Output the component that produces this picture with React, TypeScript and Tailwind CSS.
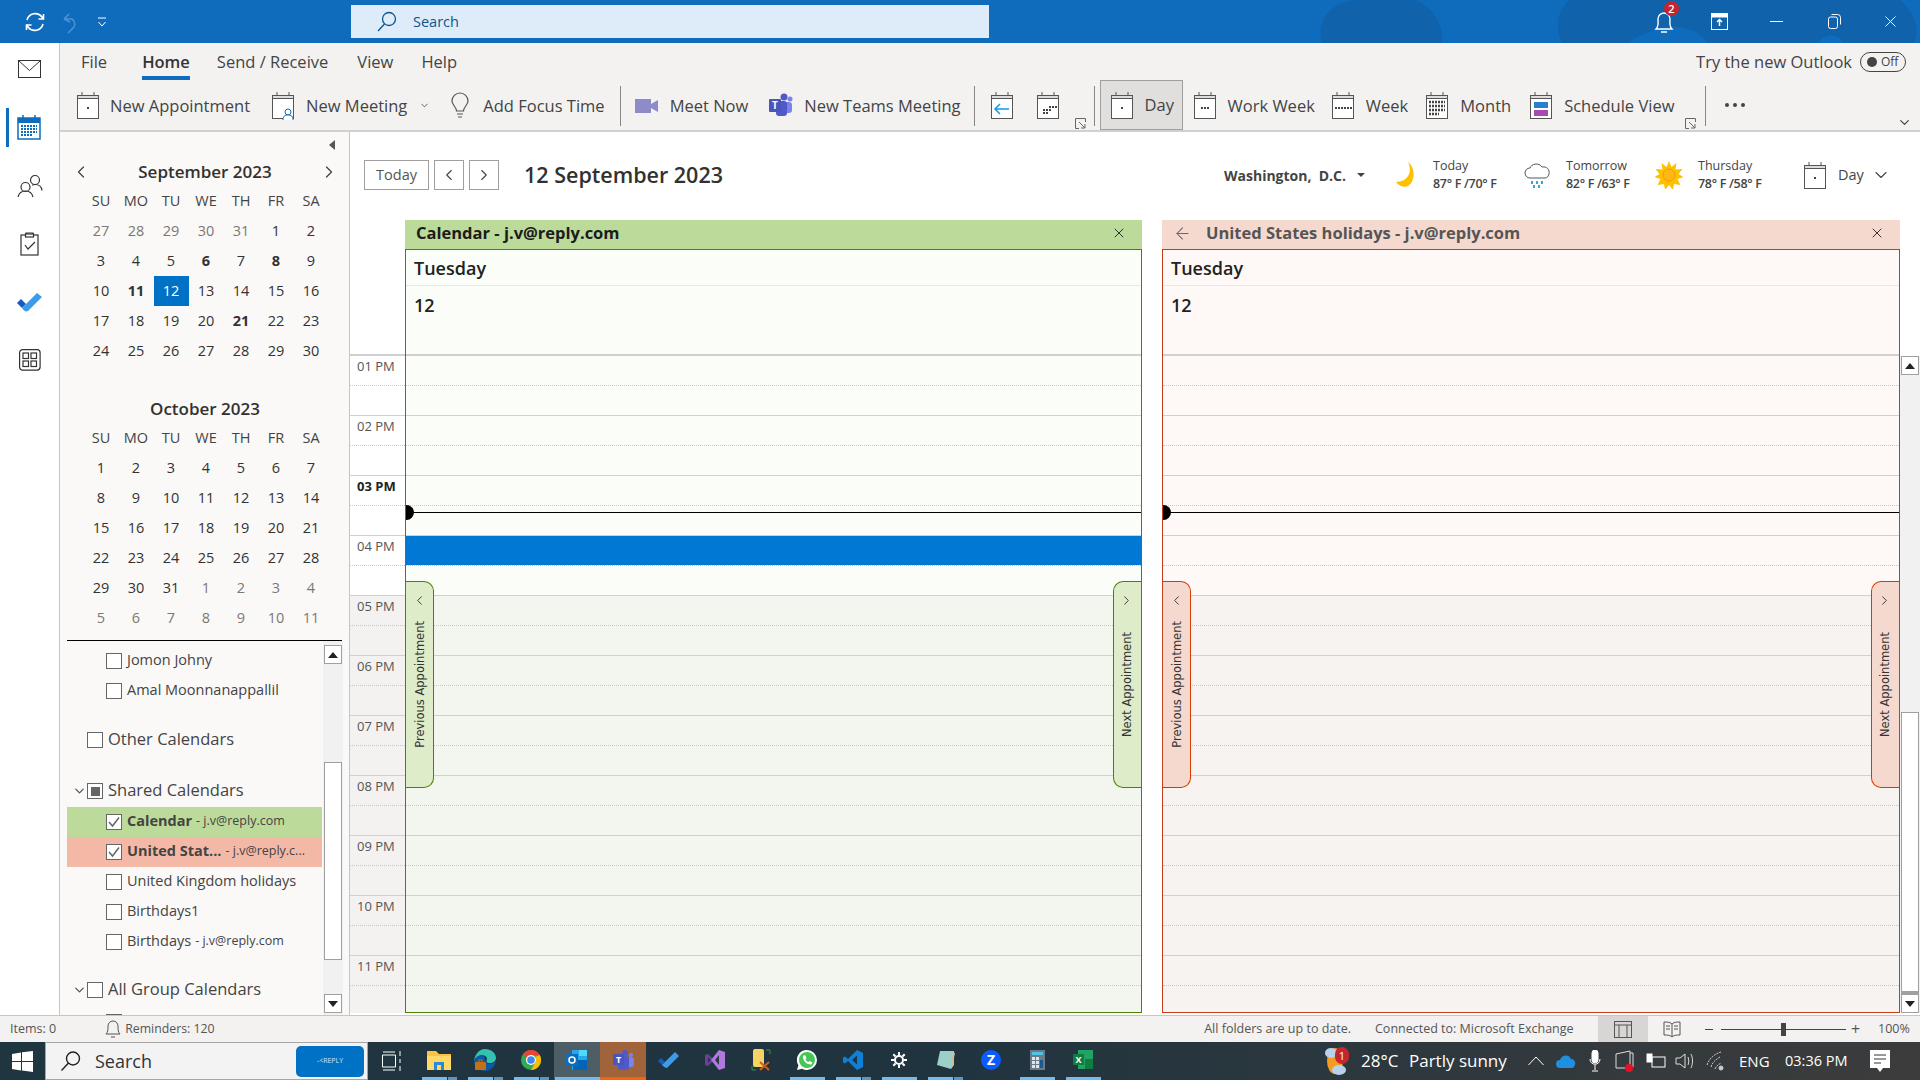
import { ChevronDown, ChevronLeft, ChevronRight, X, ArrowLeft } from 'lucide-react'
import type { ReactNode } from 'react'

const sep = [
  [27, 28, 29, 30, 31, 1, 2],
  [3, 4, 5, 6, 7, 8, 9],
  [10, 11, 12, 13, 14, 15, 16],
  [17, 18, 19, 20, 21, 22, 23],
  [24, 25, 26, 27, 28, 29, 30],
]
const oct = [
  [1, 2, 3, 4, 5, 6, 7],
  [8, 9, 10, 11, 12, 13, 14],
  [15, 16, 17, 18, 19, 20, 21],
  [22, 23, 24, 25, 26, 27, 28],
  [29, 30, 31, 1, 2, 3, 4],
  [5, 6, 7, 8, 9, 10, 11],
]
const weekdays = ['SU', 'MO', 'TU', 'WE', 'TH', 'FR', 'SA']
const hours = ['01 PM', '02 PM', '03 PM', '04 PM', '05 PM', '06 PM', '07 PM', '08 PM', '09 PM', '10 PM', '11 PM']

function CalGlyph({ children, w = 24, h = 29 }: { children?: ReactNode; w?: number; h?: number }) {
  return (
    <svg width={w} height={h} viewBox="0 0 24 29" fill="none" className="shrink-0">
      <rect x="1.5" y="4.5" width="21" height="23" fill="#fff" stroke="#555" />
      <rect x="1" y="4" width="22" height="4" fill="#555" />
      <rect x="2" y="5" width="20" height="2" fill="#ddd" />
      <path d="M6 1v4M18 1v4" stroke="#555" />
      {children}
    </svg>
  )
}

function Dots({ cells, color = '#444' }: { cells: [number, number][]; color?: string }) {
  return (
    <>
      {cells.map(([x, y]) => (
        <rect key={`${x}-${y}`} x={x} y={y} width="2" height="2" fill={color} />
      ))}
    </>
  )
}

function ExpandMark() {
  return (
    <svg width="11" height="11" viewBox="0 0 11 11" fill="none" className="shrink-0">
      <path d="M10.5 4V.5H.5v10H4M4 4l6 6M10 6v4H6" stroke="#666" />
    </svg>
  )
}

function TitleBar() {
  return (
    <div className="relative h-[43px] shrink-0 bg-[#0f6cbd] flex items-center text-white overflow-hidden">
      <svg className="absolute left-[1300px] top-0" width="620" height="43" viewBox="0 0 620 43">
        <path d="M22 43C16 24 28 2 56 0h60c18 8 28 26 26 43zM262 43c-8-16-4-34 8-43h330c16 14 20 30 14 43h-70c-6-10-20-10-26 0h-110c-10-14-30-20-50-14-12 4-22 8-30 14z" fill="#1062ab" />
      </svg>
      <div className="w-[351px] flex items-center relative">
        <svg width="24" height="24" viewBox="0 0 24 24" fill="none" stroke="#fff" strokeWidth="1.6" className="ml-[23px]">
          <path d="M4 10a8.5 8.5 0 0 1 15-3l1.5 2M20 14a8.5 8.5 0 0 1-15 3l-1.5-2M20.5 4v5h-5M3.500 20v-5h5" />
        </svg>
        <svg width="18" height="24" viewBox="0 0 18 24" fill="none" stroke="#4c93d6" strokeWidth="1.5" className="ml-[15px]">
          <path d="M2 9l5-5M2 9l6 3M2 9h8a6 6 0 0 1 2 8l-6 6" />
        </svg>
        <svg width="10" height="12" viewBox="0 0 10 12" fill="none" stroke="#fff" className="ml-[17px]">
          <path d="M1 2h8M1.500 6L5 10l3.500-4" />
        </svg>
      </div>
      <div className="relative w-[638px] h-[33px] bg-[#deecf9] flex items-center text-[#0f548c]">
        <svg width="22" height="22" viewBox="0 0 22 22" fill="none" stroke="#0f548c" strokeWidth="1.3" className="ml-[25px]">
          <circle cx="13" cy="8" r="6.500" />
          <path d="M8.500 13L2 20" />
        </svg>
        <span className="ml-[15px] text-[14.5px]">Search</span>
      </div>
      <div className="relative ml-auto flex items-center">
        <div className="relative mr-[35px]">
          <svg width="24" height="28" viewBox="0 0 24 28" fill="none" stroke="#fff" strokeWidth="1.4">
            <path d="M4 21c3-3 2-6 2-10a6 6 0 0 1 12 0c0 4-1 7 2 10zM9 24h6" />
          </svg>
          <span className="absolute left-[12px] -top-[7px] w-[15px] h-[15px] rounded-full bg-[#c4262e] text-[11px] leading-[15px] text-center font-semibold">2</span>
        </div>
        <svg width="17" height="17" viewBox="0 0 17 17" fill="none" stroke="#fff" className="mr-[42px]">
          <rect x=".5" y=".5" width="16" height="16" />
          <rect x="1" y="1" width="15" height="3" fill="#fff" />
          <path d="M8.500 13V7M6 9l2.500-2.500L11 9" strokeWidth="1.500" />
        </svg>
        <div className="w-[13px] h-px bg-white mr-[45px]" />
        <svg width="13" height="15" viewBox="0 0 13 15" fill="none" stroke="#fff" className="mr-[40px]">
          <rect x=".5" y="3" width="9" height="11.500" rx="2" />
          <path d="M3.500.5h6a3 3 0 0 1 3 3v7" />
        </svg>
        <X size={19} strokeWidth={1.2} className="mr-[20px]" />
      </div>
    </div>
  )
}

function RailIcon({ children, active }: { children: ReactNode; active?: boolean }) {
  return (
    <div className="relative h-[58px] flex items-center justify-center">
      {active && <div className="absolute left-[6px] top-[9px] w-[3px] h-[39px] bg-[#0f6cbd]" />}
      {children}
    </div>
  )
}

function Rail() {
  return (
    <div className="w-[60px] shrink-0 bg-white border-r border-[#c8c6c4] flex flex-col">
      <div className="-mt-[2px]">
        <RailIcon>
          <svg width="24" height="20" viewBox="0 0 24 20" fill="none" stroke="#333">
            <rect x=".5" y=".5" width="22" height="17" fill="#fff" />
            <path d="M.5 .5l11 10 11-10" />
          </svg>
        </RailIcon>
        <RailIcon active>
          <svg width="26" height="26" viewBox="0 0 26 26" fill="none">
            <rect x="1" y="3" width="22" height="21" fill="#fff" stroke="#0f6cbd" strokeWidth="1.500" />
            <rect x="1" y="3" width="22" height="5" fill="#0f6cbd" />
            <path d="M6 0v4M18 0v4" stroke="#0f6cbd" strokeWidth="1.500" />
            <path d="M4 11h16M4 14h16M4 17h16M4 20h12" stroke="#0f6cbd" strokeWidth="2" strokeDasharray="2 1" />
          </svg>
        </RailIcon>
        <RailIcon>
          <svg width="26" height="24" viewBox="0 0 26 24" fill="none" stroke="#333" strokeWidth="1.200">
            <circle cx="8.500" cy="13" r="4.500" />
            <path d="M1 23c1-4 3-6 7.500-6s6.500 2 7.500 6" />
            <circle cx="18" cy="6" r="4.500" />
            <path d="M15 11c1 0 2-.5 3-.5 4 0 6.500 2 7 6" />
          </svg>
        </RailIcon>
        <RailIcon>
          <svg width="20" height="24" viewBox="0 0 20 24" fill="none" stroke="#333" strokeWidth="1.200">
            <rect x="1" y="3" width="17" height="20" />
            <path d="M6 3V1h7v2M5 13l3 4 7-7" />
            <rect x="5.500" y="2" width="8" height="3" fill="#fff" />
          </svg>
        </RailIcon>
        <RailIcon>
          <svg width="26" height="20" viewBox="0 0 26 20" fill="none">
            <path d="M0 11l4-4 5 5-4 4z" fill="#185abd" />
            <path d="M5 16l4-4L20 1l5 4L11 19c-2 1-4 0-6-3z" fill="#3d9be9" />
          </svg>
        </RailIcon>
        <RailIcon>
          <svg width="22" height="22" viewBox="0 0 22 22" fill="none" stroke="#333" strokeWidth="1.200">
            <rect x=".6" y=".6" width="20.500" height="20.500" rx="3" />
            <rect x="4" y="4" width="5.500" height="5.500" />
            <rect x="12" y="4" width="5.500" height="5.500" />
            <rect x="4" y="12" width="5.500" height="5.500" />
            <rect x="12" y="12" width="5.500" height="5.500" />
          </svg>
        </RailIcon>
      </div>
    </div>
  )
}

function ToolItem({ icon, label, gap = 'ml-[11px]', className = '' }: { icon: ReactNode; label: string; gap?: string; className?: string }) {
  return (
    <div className={`flex items-center ${className}`}>
      {icon}
      <span className={`${gap} mt-[1px] text-[16.500px] text-[#444] whitespace-nowrap`}>{label}</span>
    </div>
  )
}

function Ribbon() {
  return (
    <div className="h-[89px] shrink-0 bg-[#f3f2f1] border-b-2 border-[#d2d0ce] flex flex-col">
      <div className="h-[38px] flex items-center text-[16.500px] text-[#444] relative">
        <span className="ml-[21px]">File</span>
        <span className="ml-[35px] relative font-semibold text-[#333]">
          Home
          <span className="absolute left-0 right-0 -bottom-[6px] h-[4px] bg-[#0f6cbd]" />
        </span>
        <span className="ml-[27px]">Send / Receive</span>
        <span className="ml-[29px]">View</span>
        <span className="ml-[28px]">Help</span>
        <span className="ml-auto">Try the new Outlook</span>
        <div className="ml-[8px] mr-[14px] w-[46px] h-[20px] rounded-full border border-[#444] flex items-center">
          <span className="ml-[6px] w-[10px] h-[10px] rounded-full bg-[#444]" />
          <span className="ml-[4px] text-[12px]">Off</span>
        </div>
      </div>
      <div className="relative flex items-center h-[49px]">
        <ToolItem
          className="ml-[16px]"
          icon={
            <CalGlyph>
              <Dots cells={[[11, 16]]} />
            </CalGlyph>
          }
          label="New Appointment"
          gap="ml-[10px]"
        />
        <ToolItem
          className="ml-[21px]"
          icon={
            <CalGlyph>
              <circle cx="17" cy="21" r="3" fill="#fff" stroke="#0f6cbd" />
              <path d="M12 29c0-4 2-5 5-5s5 1 5 5" stroke="#0f6cbd" fill="#fff" />
            </CalGlyph>
          }
          label="New Meeting"
        />
        <ChevronDown size={11} className="ml-[12px] text-[#555]" />
        <ToolItem
          className="ml-[21px]"
          icon={
            <svg width="18" height="28" viewBox="0 0 18 28" fill="none" stroke="#555" strokeWidth="1.200">
              <path d="M5.500 19c0-4-4.500-6-4.500-10a8 8 0 0 1 16 0c0 4-4.500 6-4.500 10zM6 22h6M7 25h4" />
            </svg>
          }
          label="Add Focus Time"
          gap="ml-[14px]"
        />
        <div className="ml-[15px] w-px h-[40px] bg-[#8a8886]" />
        <ToolItem
          className="ml-[14px]"
          icon={
            <svg width="24" height="18" viewBox="0 0 24 18" className="shrink-0">
              <rect y="2" width="16" height="14" fill="#8d8cc9" />
              <path d="M16 7l7-4v12l-7-4z" fill="#8d8cc9" />
            </svg>
          }
          label="Meet Now"
        />
        <ToolItem
          className="ml-[21px]"
          icon={
            <svg width="24" height="26" viewBox="0 0 24 26" className="shrink-0">
              <circle cx="15" cy="4" r="3.500" fill="#5059c9" />
              <circle cx="21" cy="6" r="2.500" fill="#7b83eb" />
              <rect x="13" y="9" width="10" height="11" rx="3" fill="#7b83eb" />
              <rect x="7" y="8" width="11" height="15" rx="3" fill="#5059c9" />
              <rect y="6" width="12" height="13" rx="1" fill="#4b53bc" />
              <text x="6" y="16" fontSize="10" fill="#fff" textAnchor="middle" fontWeight="700">T</text>
            </svg>
          }
          label="New Teams Meeting"
        />
        <div className="ml-[13px] w-px h-[40px] bg-[#8a8886]" />
        <div className="ml-[15px]">
          <CalGlyph>
            <path d="M19 18H6M10 13l-5 5 5 5" stroke="#0f9ce8" strokeWidth="1.500" />
          </CalGlyph>
        </div>
        <div className="ml-[22px]">
          <CalGlyph>
            <Dots cells={[[7, 18], [10, 18], [13, 18], [13, 15], [16, 15], [19, 15], [7, 21], [10, 21]]} />
          </CalGlyph>
        </div>
        <div className="ml-[15px] mt-[35px]">
          <ExpandMark />
        </div>
        <div className="ml-[8px] w-px h-[40px] bg-[#8a8886]" />
        <div className="ml-[5px] self-stretch mt-[-1px] w-[83px] bg-[#e1dfdd] border border-[#a19f9d] flex items-center pl-[9px]">
          <CalGlyph>
            <Dots cells={[[11, 16]]} />
          </CalGlyph>
          <span className="ml-[11px] mt-[1px] text-[16.500px] text-[#444]">Day</span>
        </div>
        <ToolItem
          className="ml-[10px]"
          icon={
            <CalGlyph>
              <Dots cells={[[8, 16], [11, 16], [14, 16]]} />
            </CalGlyph>
          }
          label="Work Week"
        />
        <ToolItem
          className="ml-[16px]"
          icon={
            <CalGlyph>
              <Dots cells={[[4, 16], [7, 16], [10, 16], [13, 16], [16, 16], [19, 16]]} />
            </CalGlyph>
          }
          label="Week"
        />
        <ToolItem
          className="ml-[17px]"
          icon={
            <CalGlyph>
              <path d="M4 11h16M4 15h16M4 19h16M4 23h10" stroke="#444" strokeWidth="2.500" strokeDasharray="2 1" />
            </CalGlyph>
          }
          label="Month"
        />
        <ToolItem
          className="ml-[18px]"
          icon={
            <CalGlyph>
              <rect x="5" y="11" width="14" height="6" fill="#2b7cd3" />
              <rect x="5" y="19" width="14" height="6" fill="#a64ab0" />
            </CalGlyph>
          }
          label="Schedule View"
        />
        <div className="ml-[11px] mt-[35px]">
          <ExpandMark />
        </div>
        <div className="ml-[9px] w-px h-[40px] bg-[#8a8886]" />
        <div className="ml-[19px] mb-[2px] flex gap-[4px]">
          <span className="w-[4px] h-[4px] rounded-full bg-[#444]" />
          <span className="w-[4px] h-[4px] rounded-full bg-[#444]" />
          <span className="w-[4px] h-[4px] rounded-full bg-[#444]" />
        </div>
        <ChevronDown size={15} className="absolute right-[8px] bottom-[0px] text-[#444]" />
      </div>
    </div>
  )
}

function MiniMonth({ title, rows, grayFirst, bold, selected, titleClass, nav }: { title: string; rows: number[][]; grayFirst: boolean; bold: number[]; selected?: number; titleClass: string; nav?: boolean }) {
  return (
    <div>
      <div className={`${titleClass} flex items-center justify-between pl-[11px] pr-[10px] text-[17px] font-semibold text-[#323130]`}>
        {nav ? <ChevronLeft size={20} strokeWidth={1.500} className="text-[#444]" /> : <span className="w-[20px]" />}
        <span>{title}</span>
        {nav ? <ChevronRight size={20} strokeWidth={1.500} className="text-[#444]" /> : <span className="w-[20px]" />}
      </div>
      <div className="pl-[23.500px] grid grid-cols-[repeat(7,35px)] auto-rows-[30px] text-[14.500px] text-[#444]">
        {weekdays.map((d) => (
          <div key={d} className="flex items-center justify-center">{d}</div>
        ))}
        {rows.flatMap((r, i) =>
          r.map((d, j) => {
            const gray = grayFirst ? i === 0 && d > 20 : i >= 4 && d < 20 && !(i === 4 && d > 20)
            const isBold = !gray && bold.includes(d)
            const isSel = !gray && d === selected
            return (
              <div
                key={`${i}-${j}`}
                className={`flex items-center justify-center ${gray ? 'text-[#7a7876]' : 'text-[#333]'} ${isBold ? 'font-bold' : ''} ${isSel ? 'bg-[#0072c6] text-white' : ''}`}
              >
                {d}
              </div>
            )
          })
        )}
      </div>
    </div>
  )
}

function Check({ state }: { state?: 'checked' | 'mixed' }) {
  return (
    <span className="w-[16px] h-[16px] shrink-0 border border-[#666] bg-white flex items-center justify-center">
      {state === 'checked' && (
        <svg width="12" height="12" viewBox="0 0 12 12" fill="none" stroke="#666" strokeWidth="1.500">
          <path d="M1 6l3.500 4L11 1.500" />
        </svg>
      )}
      {state === 'mixed' && <span className="w-[9px] h-[9px] bg-[#666]" />}
    </span>
  )
}

function CalRow({ name, sub, state, bg = '', bold }: { name: string; sub?: string; state?: 'checked'; bg?: string; bold?: boolean }) {
  return (
    <div className={`h-[30px] shrink-0 w-[255px] pl-[39px] flex items-center text-[14.500px] text-[#444] whitespace-nowrap ${bg}`}>
      <Check state={state} />
      <span className={`ml-[5px] mb-[2px] ${bold ? 'font-bold' : ''}`}>{name}</span>
      {sub && <span className="ml-[4px] mb-[2px] text-[12.500px]">{sub}</span>}
    </div>
  )
}

function SectionRow({ name, state, chevron, className }: { name: string; state?: 'mixed'; chevron?: boolean; className: string }) {
  return (
    <div className={`${className} flex items-center pl-[5px] text-[16.500px] text-[#444]`}>
      {chevron ? <ChevronDown size={16} className="text-[#555] w-[15px]" /> : <span className="w-[15px]" />}
      <Check state={state} />
      <span className="ml-[5px] mb-[2px] whitespace-nowrap">{name}</span>
    </div>
  )
}

function ScrollBtn({ up }: { up?: boolean }) {
  return (
    <div className="h-[19px] w-[18px] border border-[#a0a0a0] bg-white flex items-center justify-center shrink-0">
      <span className={`w-0 h-0 border-x-[5px] border-x-transparent ${up ? 'border-b-[6px] border-b-[#222]' : 'border-t-[6px] border-t-[#222]'}`} />
    </div>
  )
}

function FolderPane() {
  return (
    <div className="w-[290px] shrink-0 bg-[#faf9f8] border-r border-[#c8c6c4] flex flex-col relative">
      <div className="h-[25px] flex items-center justify-end pr-[14px]">
        <span className="w-0 h-0 border-y-[5px] border-y-transparent border-r-[6px] border-r-[#555]" />
      </div>
      <MiniMonth title="September 2023" titleClass="h-[29px]" rows={sep} grayFirst bold={[6, 8, 11, 21]} selected={12} nav />
      <div className="h-[29px]" />
      <MiniMonth title="October 2023" titleClass="h-[28px]" rows={oct} grayFirst={false} bold={[]} />
      <div className="h-[7px]" />
      <div className="mx-[7px] h-px bg-black shrink-0" />
      <div className="flex-1 min-h-0 overflow-hidden flex ml-[7px] mr-[6px]">
        <div className="w-[256px] pt-[5px] flex flex-col overflow-hidden">
          <CalRow name="Jomon Johny" />
          <CalRow name="Amal Moonnanappallil" />
          <div className="h-[19px] shrink-0" />
          <SectionRow name="Other Calendars" className="h-[30px] shrink-0" />
          <div className="h-[20px] shrink-0" />
          <SectionRow name="Shared Calendars" state="mixed" chevron className="h-[32px] shrink-0" />
          <CalRow name="Calendar" sub="- j.v@reply.com" state="checked" bg="bg-[#bcda9a]" bold />
          <CalRow name="United Stat..." sub="- j.v@reply.c..." state="checked" bg="bg-[#f4b9a6]" bold />
          <CalRow name="United Kingdom holidays" />
          <CalRow name="Birthdays1" />
          <CalRow name="Birthdays" sub="- j.v@reply.com" />
          <div className="h-[18px] shrink-0" />
          <SectionRow name="All Group Calendars" chevron className="h-[30px] shrink-0" />
          <div className="mt-[9px] ml-[39px] w-[16px] h-[16px] border border-[#666] shrink-0" />
        </div>
        <div className="w-[20px] bg-[#f1f1f1] flex flex-col items-center pt-[4px] pb-[2px]">
          <ScrollBtn up />
          <div className="h-[98px]" />
          <div className="h-[198px] w-[18px] bg-white border border-[#a0a0a0]" />
          <div className="flex-1" />
          <ScrollBtn />
        </div>
      </div>
    </div>
  )
}

function Weather({ icon, day, temp, className = '' }: { icon: ReactNode; day: string; temp: string; className?: string }) {
  return (
    <div className={`flex items-center ${className}`}>
      <div className="w-[28px] flex justify-center">{icon}</div>
      <div className="ml-[15px] w-[66px] flex flex-col text-[12.500px] leading-[18px] text-[#444] whitespace-nowrap">
        <span>{day}</span>
        <span className="font-semibold tracking-[-0.3px]">{temp}</span>
      </div>
    </div>
  )
}

function DateBar() {
  return (
    <div className="h-[88px] shrink-0 flex items-start pt-[28px]">
      <div className="ml-[14px] w-[65px] h-[30px] border border-[#a19f9d] flex items-center justify-center text-[14.500px] text-[#555]">Today</div>
      <div className="ml-[5px] w-[30px] h-[30px] border border-[#a19f9d] flex items-center justify-center"><ChevronLeft size={18} strokeWidth={1.500} className="text-[#444]" /></div>
      <div className="ml-[5px] w-[30px] h-[30px] border border-[#a19f9d] flex items-center justify-center"><ChevronRight size={18} strokeWidth={1.500} className="text-[#444]" /></div>
      <div className="ml-[25px] h-[30px] flex items-center text-[21.500px] font-semibold text-[#323130] whitespace-nowrap">12 September 2023</div>
      <div className="ml-auto h-[30px] flex items-center">
        <span className="text-[14px] font-bold text-[#444] whitespace-nowrap">Washington,&nbsp; D.C.</span>
        <span className="ml-[11px] w-0 h-0 border-x-[4px] border-x-transparent border-t-[4px] border-t-[#444]" />
        <Weather
          className="ml-[25px]"
          day="Today"
          temp="87° F /70° F"
          icon={
            <svg width="22" height="28" viewBox="0 0 22 28">
              <path d="M15 1c4 8 2 19-12 20 3 4 8 6 12 4 7-4 8-18 0-24z" fill="#ffc000" />
            </svg>
          }
        />
        <Weather
          className="ml-[24px]"
          day="Tomorrow"
          temp="82° F /63° F"
          icon={
            <svg width="28" height="28" viewBox="0 0 28 28" fill="none">
              <path d="M7 17a5 5 0 0 1 0-10c1-4 9-6 12-1 5-1 8 3 7 7-1 3-2 4-4 4z" stroke="#555" />
              <path d="M9 20v3M14 20v3M19 20v3M11 24v3M16 24v3" stroke="#2ea5ea" strokeWidth="2" />
            </svg>
          }
        />
        <Weather
          className="ml-[23px]"
          day="Thursday"
          temp="78° F /58° F"
          icon={
            <svg width="28" height="28" viewBox="0 0 28 28">
              <path d="M14 0l2.500 6 5-4-1 6.500 7-.5-4 5 5 3-6 2 3 6-6.500-1-1 6-4-5-4 5-1-6-6.500 1 3-6-6-2 5-3-4-5 7 .5-1-6.500 5 4z" fill="#ffc000" />
              <circle cx="14" cy="14" r="6" fill="#fdb813" stroke="#e8a000" />
            </svg>
          }
        />
        <div className="ml-[39px]">
          <CalGlyph>
            <Dots cells={[[11, 16]]} />
          </CalGlyph>
        </div>
        <span className="ml-[11px] w-[27px] text-[14.500px] text-[#444]">Day</span>
        <ChevronDown size={20} strokeWidth={1.300} className="ml-[6px] mr-[29px] text-[#444]" />
      </div>
    </div>
  )
}

type Tone = {
  head: string
  text: string
  border: string
  work: string
  off: string
  tab: string
  tabBorder: string
}

const green: Tone = {
  head: 'bg-[#bcda9a]',
  text: 'text-[#1b1b1b]',
  border: 'border-[#498205]',
  work: 'bg-[#fbfdf8]',
  off: 'bg-[#f3f6ef]',
  tab: 'bg-[#deecc9]',
  tabBorder: 'border-[#498205]',
}
const red: Tone = {
  head: 'bg-[#f6d9ce]',
  text: 'text-[#555]',
  border: 'border-[#c43e1c]',
  work: 'bg-[#fef9f7]',
  off: 'bg-[#f6f3f0]',
  tab: 'bg-[#f6d9ce]',
  tabBorder: 'border-[#d83b01]',
}

function SideTab({ tone, label, prev }: { tone: Tone; label: string; prev?: boolean }) {
  return (
    <div
      className={`absolute top-[331px] h-[207px] w-[29px] border ${tone.tab} ${tone.tabBorder} flex flex-col items-center text-[#333] ${
        prev ? '-left-px rounded-r-[10px] border-l-0' : '-right-px rounded-l-[10px] border-r-0'
      }`}
    >
      {prev ? <ChevronLeft size={15} strokeWidth={1.500} className="mt-[11px] shrink-0" /> : <ChevronRight size={15} strokeWidth={1.500} className="mt-[11px] mr-[3px] shrink-0" />}
      <span className={`${prev ? 'mt-[13px] ml-[3px]' : 'mt-[24px]'} [writing-mode:vertical-rl] rotate-180 font-['DejaVu_Sans',sans-serif] text-[11.500px] leading-none whitespace-nowrap`}>{label}</span>
    </div>
  )
}

function CalendarColumn({ tone, back, title, className, event }: { tone: Tone; back?: boolean; title: string; className: string; event?: boolean }) {
  return (
    <div className={`${className} flex flex-col`}>
      <div className={`h-[29px] shrink-0 pb-[3px] ${tone.head} ${tone.text} flex items-center text-[16.500px] font-bold pl-[11px] pr-[15px]`}>
        {back && <ArrowLeft size={19} strokeWidth={1.300} className="mr-[14px] text-[#666]" />}
        <span className="whitespace-nowrap">{title}</span>
        <X size={16} strokeWidth={1.500} className="ml-auto text-[#333]" />
      </div>
      <div className={`relative flex-1 min-h-0 overflow-hidden border ${tone.border}`}>
        <div className={`h-[36px] border-b border-[#e8e8e4] pl-[8px] pt-[1px] flex items-center text-[18px] font-semibold text-[#222] ${tone.work}`}>Tuesday</div>
        <div className={`h-[70px] pl-[8px] pt-[6px] text-[18px] font-semibold text-[#222] border-b-2 border-[#d0d0d0] ${tone.work}`}>12</div>
        {hours.map((h, i) => (
          <div key={h} className={`${i === 0 ? 'h-[59px]' : 'h-[60px] border-t border-[#d2d0ce]'} ${i < 4 ? tone.work : tone.off}`}>
            <div className="h-[30px] border-b border-dotted border-[#c8c8c8]" />
          </div>
        ))}
        <div className="absolute left-0 right-0 top-[262px] h-px bg-black" />
        <div className="absolute -left-px top-[255px] w-[9px] h-[15px] rounded-r-full bg-black" />
        {event && <div className="absolute left-0 right-0 top-[286px] h-[29px] bg-[#0078d4]" />}
        <SideTab tone={tone} label="Previous Appointment" prev />
        <SideTab tone={tone} label="Next Appointment" />
      </div>
    </div>
  )
}

function TimeGutter() {
  return (
    <div className="w-[55px] shrink-0 flex flex-col overflow-hidden">
      <div className="h-[136px] shrink-0 border-b-2 border-[#d0d0d0]" />
      {hours.map((h, i) => (
        <div key={h} className={`shrink-0 ${i === 0 ? 'h-[59px]' : 'h-[60px] border-t border-[#d2d0ce]'} ${i < 4 ? 'bg-white' : 'bg-[#f3f2f1]'}`}>
          <div className={`h-[30px] border-b border-dotted border-[#c8c8c8] pl-[7px] pt-[1px] text-[13px] leading-[18px] ${h === '03 PM' ? 'font-bold text-[#222]' : 'text-[#555]'}`}>{h}</div>
        </div>
      ))}
    </div>
  )
}

function MainView() {
  return (
    <div className="flex-1 min-w-0 bg-white flex flex-col">
      <DateBar />
      <div className="flex-1 min-h-0 flex pb-[2px]">
        <TimeGutter />
        <CalendarColumn className="w-[737px] shrink-0" tone={green} title="Calendar - j.v@reply.com" event />
        <div className="w-[20px] shrink-0" />
        <CalendarColumn className="w-[738px] shrink-0" tone={red} back title="United States holidays - j.v@reply.com" />
        <div className="w-[20px] shrink-0 flex flex-col">
          <div className="h-[136px] shrink-0" />
          <div className="flex-1 bg-[#f1f1f1] flex flex-col items-center">
            <ScrollBtn up />
            <div className="h-[337px] shrink-0" />
            <div className="h-[282px] w-[18px] shrink-0 bg-white border border-[#a0a0a0] border-b-[3px]" />
            <ScrollBtn />
          </div>
        </div>
      </div>
    </div>
  )
}

function StatusBar() {
  return (
    <div className="h-[27px] shrink-0 bg-[#f3f2f1] border-t border-[#c8c6c4] flex items-center text-[12.500px] text-[#555] whitespace-nowrap">
      <span className="ml-[10px]">Items: 0</span>
      <svg width="18" height="20" viewBox="0 0 18 20" fill="none" stroke="#555" className="ml-[48px]">
        <path d="M2 15c2-2 2-4 2-8a5 5 0 0 1 10 0c0 4 0 6 2 8zM7 18h4" />
      </svg>
      <span className="ml-[3px] text-[12.300px]">Reminders: 120</span>
      <span className="ml-auto">All folders are up to date.</span>
      <span className="ml-[24px] w-[200px]">Connected to: Microsoft Exchange</span>
      <div className="ml-[23px] w-[50px] self-stretch bg-[#d8d6d4] flex items-center justify-center">
        <svg width="18" height="17" viewBox="0 0 18 17" fill="none" stroke="#555">
          <rect x=".5" y=".5" width="17" height="16" />
          <path d="M.5 4h17M5 4v12M13 4v12" />
        </svg>
      </div>
      <svg width="18" height="17" viewBox="0 0 18 17" fill="none" stroke="#555" className="ml-[15px]">
        <path d="M9 3c-2-2-5-2-8-2v13c3 0 6 0 8 2 2-2 5-2 8-2V1c-3 0-6 0-8 2zM9 3v13M3 5h4M3 8h4M11 5h4M11 8h4" />
      </svg>
      <span className="ml-[24px] w-[8px] h-px bg-[#444]" />
      <div className="ml-[8px] w-[125px] h-px bg-[#444] relative">
        <span className="absolute left-[60px] -top-[6px] w-[5px] h-[13px] bg-[#444]" />
      </div>
      <span className="ml-[5px] w-[10px] text-[16px] leading-none">+</span>
      <span className="ml-[17px] w-[31px] mr-[11px]">100%</span>
    </div>
  )
}

function Cell({ children, under, className = '' }: { children: ReactNode; under?: 'split' | 'full' | 'active' | 'teams'; className?: string }) {
  return (
    <div className={`relative w-[46px] h-full shrink-0 flex items-center justify-center ${className}`}>
      <div className="mb-[3px] flex">{children}</div>
      {under === 'full' && <div className="absolute bottom-0 left-[6px] right-[5px] h-[3px] bg-[#76b9ed]" />}
      {under === 'split' && (
        <div className="absolute bottom-0 left-[6px] right-[5px] h-[3px] flex">
          <div className="w-[25px] bg-[#76b9ed]" />
          <div className="flex-1 ml-px bg-[#5c95c0]" />
        </div>
      )}
      {under === 'active' && <div className="absolute bottom-0 left-[1px] right-0 h-[3px] bg-[#76b9ed]" />}
      {under === 'teams' && <div className="absolute bottom-0 left-0 right-0 h-[3px] bg-[#f7630c]" />}
    </div>
  )
}

function Taskbar() {
  return (
    <div className="h-[38px] shrink-0 bg-linear-to-r from-[#1f3540] via-[#20343f] to-[#3c3c3c] flex items-center text-white whitespace-nowrap">
      <div className="w-[45px] flex justify-center">
        <svg width="21" height="21" viewBox="0 0 21 21" fill="#fff">
          <path d="M0 3l9-1.500V10H0zM10 1.300L21 0v10H10zM0 11h9v8.500L0 18zM10 11h11v10l-11-1.500z" />
        </svg>
      </div>
      <div className="w-[323px] h-full bg-[#f3f3f3] border border-[#a6a6a6] flex items-center">
        <svg width="22" height="22" viewBox="0 0 22 22" fill="none" stroke="#222" strokeWidth="1.400" className="ml-[14px]">
          <circle cx="13" cy="8.500" r="6.500" />
          <path d="M8.500 13L1.500 20.500" />
        </svg>
        <span className="ml-[13px] text-[18px] text-[#333]">Search</span>
        <div className="ml-auto mr-[3px] w-[68px] h-[31px] rounded-[5px] bg-[#0072c6] flex items-center justify-center text-[7px] text-[#cfe4f7]">-&lt;REPLY</div>
      </div>
      <div className="w-[48px] flex justify-center">
        <svg width="21" height="22" viewBox="0 0 21 22" fill="none" stroke="#fff">
          <path d="M.5 5h13v12H.5zM1 2h12M1 20h12M18 1v5M18 9v4M18 16v5" />
        </svg>
      </div>
      <div className="flex h-full">
        <Cell under="split">
          <svg width="26" height="22" viewBox="0 0 26 22">
            <path d="M1 2h9l3 3h12v16H1z" fill="#f6c343" />
            <path d="M1 7h24v14H1z" fill="#ffd966" />
            <path d="M8 13h10v8h-3v-5h-4v5H8z" fill="#2b88d8" />
          </svg>
        </Cell>
        <Cell under="split">
          <svg width="22" height="22" viewBox="0 0 22 22">
            <path d="M11 0c6 0 11 4 11 9 0 3-3 5-6 5-4 0-4-2-3-4 0-3-4-5-8-3-2 1-4 3-5 5C1 5 5 0 11 0z" fill="#35c1b1" />
            <path d="M0 12c1-4 6-7 10-5 2 2 0 5 3 7 4 2 7 0 9-2-1 6-6 10-11 10C5 22 0 18 0 12z" fill="#0c59a4" />
            <rect x="1" y="13" width="11" height="8" rx="1" fill="#c4701a" />
            <rect x="5" y="11" width="3" height="3" fill="none" stroke="#c4701a" />
          </svg>
        </Cell>
        <Cell under="split">
          <svg width="20" height="20" viewBox="0 0 20 20">
            <circle cx="10" cy="10" r="10" fill="#34a853" />
            <path d="M10 0a10 10 0 0 1 8.700 5H10a5 5 0 0 0-4.500 3L2.500 3.500A10 10 0 0 1 10 0z" fill="#ea4335" />
            <path d="M18.700 5A10 10 0 0 1 10 20l4.300-7.500A5 5 0 0 0 14 7z" fill="#fbbc05" />
            <circle cx="10" cy="10" r="5" fill="#fff" />
            <circle cx="10" cy="10" r="3.800" fill="#4285f4" />
          </svg>
        </Cell>
        <Cell under="active" className="bg-[#4d5e66]">
          <svg width="22" height="22" viewBox="0 0 22 22">
            <rect x="6" y="1" width="15" height="20" fill="#28a8ea" />
            <rect x="13" y="1" width="8" height="6" fill="#50d9ff" />
            <path d="M7 11h14v10H7z" fill="#0364b8" />
            <rect y="5" width="12" height="12" fill="#0f6cbd" />
            <circle cx="6" cy="11" r="3" fill="none" stroke="#fff" strokeWidth="1.500" />
          </svg>
        </Cell>
        <Cell under="teams" className="bg-[#a0633a]">
          <svg width="21" height="22" viewBox="0 0 21 22">
            <circle cx="12" cy="4" r="3" fill="#5059c9" />
            <circle cx="18" cy="6" r="2" fill="#7b83eb" />
            <rect x="12" y="8" width="9" height="10" rx="3" fill="#7b83eb" />
            <rect x="5" y="7" width="11" height="14" rx="3" fill="#5059c9" />
            <rect y="5" width="11" height="11" rx="1" fill="#4b53bc" />
            <text x="5.500" y="14" fontSize="9" fill="#fff" textAnchor="middle" fontWeight="700">T</text>
          </svg>
        </Cell>
        <Cell>
          <svg width="22" height="16" viewBox="0 0 22 16">
            <path d="M0 9l3-3 4 4-3 3z" fill="#185abd" />
            <path d="M4 13l3-3L17 0l4 4L9 16c-2 0-3-1-5-3z" fill="#3d9be9" />
          </svg>
        </Cell>
        <Cell>
          <svg width="20" height="20" viewBox="0 0 20 20">
            <path d="M0 5l3-1 6 6-6 6-3-1z" fill="#6a3fa0" />
            <path d="M14 0l6 2v16l-6 2-8-10z" fill="#b179e0" />
            <path d="M14 5l-4 5 4 5z" fill="#2a3a44" />
            <path d="M3 7l3 3-3 3z" fill="#2a3a44" />
          </svg>
        </Cell>
        <Cell>
          <svg width="20" height="22" viewBox="0 0 20 22">
            <rect x="2" y="0" width="11" height="18" rx="2" fill="#f6d365" />
            <path d="M1 17v4h4M15 1h4v4" fill="none" stroke="#3e8e41" />
            <path d="M9 13l9 8M18 13l-9 8" stroke="#d35c1a" strokeWidth="2" />
          </svg>
        </Cell>
        <Cell under="full">
          <svg width="20" height="20" viewBox="0 0 20 20">
            <path d="M10 0a10 10 0 0 1 0 20 10 10 0 0 1-5-1.300L0 20l1.400-4.800A10 10 0 0 1 10 0z" fill="#fff" />
            <circle cx="10" cy="10" r="8" fill="#45c655" />
            <path d="M6 6l2-1 1.500 3-1 1c.5 2 2 3 3 3l1-1 3 1.500-1 2c-5 .5-9-4-8.500-8.500z" fill="#fff" />
          </svg>
        </Cell>
        <Cell under="split">
          <svg width="20" height="20" viewBox="0 0 20 20">
            <path d="M14 0l6 3v14l-6 3L5 11l-3 2.500L0 12.500v-5L2 6.500 5 9zM14 5.500L9 10l5 4.500z" fill="#0f80d8" />
          </svg>
        </Cell>
        <Cell under="full">
          <svg width="16" height="16" viewBox="0 0 16 16" fill="none" stroke="#fff" strokeWidth="2">
            <circle cx="8" cy="8" r="4" />
            <path d="M8 0v3M8 13v3M0 8h3M13 8h3M2.300 2.300l2.200 2.200M11.500 11.500l2.200 2.200M2.300 13.700l2.200-2.200M11.500 4.500l2.200-2.200" />
          </svg>
        </Cell>
        <Cell under="split">
          <svg width="20" height="20" viewBox="0 0 20 20">
            <path d="M5 1h14v14l-3 4-14-4z" fill="#9ccfc9" />
            <path d="M18 2l2 1-3 15h-1z" fill="#d7b98a" />
          </svg>
        </Cell>
        <Cell>
          <div className="w-[20px] h-[20px] rounded-full bg-[#0b5cff] flex items-center justify-center text-[14px] font-bold leading-none">Z</div>
        </Cell>
        <Cell under="full">
          <svg width="15" height="20" viewBox="0 0 15 20">
            <rect width="15" height="20" fill="#6d7b87" />
            <rect x="2" y="2" width="11" height="3" fill="#4fc3ea" />
            <path d="M2 7h3v3H2zM6 7h3v3H6zM2 11h3v3H2zM6 11h3v3H6zM2 15h3v3H2zM6 15h3v3H6z" fill="#dfe5ea" />
            <rect x="10" y="10" width="3" height="8" fill="#1c5a94" />
          </svg>
        </Cell>
        <Cell under="full">
          <svg width="20" height="19" viewBox="0 0 20 19">
            <rect x="5" width="15" height="19" fill="#21a366" />
            <rect x="12" y="9" width="8" height="10" fill="#107c41" />
            <rect y="4" width="11" height="11" fill="#107c41" />
            <text x="5.500" y="13" fontSize="9" fill="#fff" textAnchor="middle" fontWeight="700">X</text>
          </svg>
        </Cell>
      </div>
      <div className="ml-[218px] relative flex">
        <svg width="24" height="28" viewBox="0 0 24 28">
          <ellipse cx="11" cy="14" rx="8" ry="13" fill="#f39c1f" />
          <ellipse cx="7" cy="6" rx="6" ry="5" fill="#b9d2ec" />
          <ellipse cx="15" cy="23" rx="7" ry="5" fill="#b9d2ec" />
        </svg>
        <span className="absolute left-[11px] top-0 w-[14px] h-[17px] rounded-full bg-[#c4262e] text-[11px] leading-[17px] text-center">1</span>
      </div>
      <span className="ml-[13px] w-[38px] text-[17px]">28°C</span>
      <span className="ml-[10px] w-[96px] text-[17px]">Partly sunny</span>
      <svg width="16" height="10" viewBox="0 0 16 10" fill="none" stroke="#fff" className="ml-[23px]">
        <path d="M.5 9L8 1l7.500 8" />
      </svg>
      <svg width="20" height="14" viewBox="0 0 20 14" className="ml-[12px]">
        <path d="M4 14a4 4 0 0 1 0-8c1-4 8-7 11-1 3 0 5 3 4 6-1 2-2 3-3 3z" fill="#1f8fe0" />
      </svg>
      <svg width="12" height="22" viewBox="0 0 12 22" fill="none" stroke="#fff" className="ml-[13px]">
        <rect x="3" y="0" width="6" height="13" rx="3" fill="#fff" />
        <path d="M1 9c0 7 10 7 10 0M6 15v5M3 21h6" />
      </svg>
      <svg width="20" height="22" viewBox="0 0 20 22" fill="none" stroke="#ddd" className="ml-[14px]">
        <path d="M1 4l14-3v17H1zM15 3h3v14" />
        <circle cx="14" cy="18" r="4" fill="#e81123" stroke="none" />
      </svg>
      <svg width="20" height="16" viewBox="0 0 20 16" fill="none" stroke="#fff" className="ml-[11px]">
        <rect x="6" y="4" width="13" height="10" />
        <rect x="1" y="1" width="5" height="8" fill="#fff" />
      </svg>
      <svg width="20" height="18" viewBox="0 0 20 18" fill="none" stroke="#ddd" className="ml-[9px]">
        <path d="M1 6h4l5-4v14l-5-4H1zM13 5c1 3 1 5 0 8M16 2c2 4 2 10 0 14" />
      </svg>
      <svg width="20" height="20" viewBox="0 0 20 20" fill="none" stroke="#ccc" className="ml-[11px]">
        <path d="M1 14C3 8 8 3 15 1M5 16c1-4 4-7 9-10M9 18c1-3 3-4 6-6" strokeDasharray="2 1" />
        <circle cx="15" cy="17" r="2" fill="#ccc" />
      </svg>
      <span className="ml-[13px] w-[29px] text-[15px]">ENG</span>
      <span className="ml-[17px] w-[60px] text-[14.500px]">03:36 PM</span>
      <svg width="20" height="22" viewBox="0 0 20 22" className="ml-[25px]">
        <path d="M0 0h20v18h-7l-3 4-3-4H0z" fill="#fff" />
        <path d="M4 5h12M4 9h12M4 13h7" stroke="#333" />
      </svg>
    </div>
  )
}

export default function App() {
  return (
    <div className="w-[1920px] h-[1080px] flex flex-col overflow-hidden font-['Open_Sans','Noto_Sans',sans-serif] bg-white">
      <TitleBar />
      <div className="flex-1 min-h-0 flex">
        <Rail />
        <div className="flex-1 min-w-0 flex flex-col">
          <Ribbon />
          <div className="flex-1 min-h-0 flex">
            <FolderPane />
            <MainView />
          </div>
        </div>
      </div>
      <StatusBar />
      <Taskbar />
    </div>
  )
}
